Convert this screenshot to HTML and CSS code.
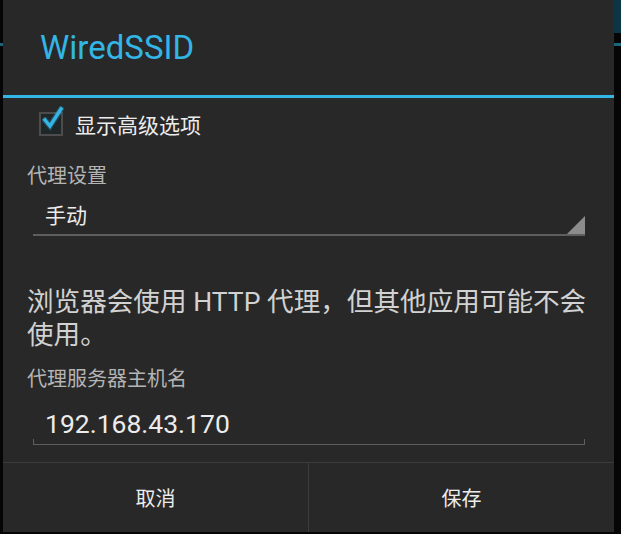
FILE: index.html
```html
<!DOCTYPE html>
<html lang="zh-CN">
<head>
    <meta charset="UTF-8">
    <title>WiredSSID</title>
    <meta name="viewport" content="width=device-width, initial-scale=1">
    <link rel="stylesheet" href="styles.css">
</head>
<body>
    <div class="dialog">
        <div class="title">WiredSSID</div>
        <div class="title-rule"></div>

        <div class="content">
            <label class="check">
                <span class="check-box">
                    <svg width="30" height="30" viewBox="0 0 30 30">
                        <path d="M6 15 L11 21 L22 4" fill="none" stroke="#33b5e5" stroke-width="6" stroke-opacity="0.25" stroke-linecap="round"/>
                        <path d="M6 15 L11 21 L22 4" fill="none" stroke="#33b5e5" stroke-width="3.5" stroke-linecap="square"/>
                    </svg>
                </span>
                <span>显示高级选项</span>
            </label>

            <div class="label">代理设置</div>
            <div class="spinner">手动</div>

            <p class="hint">浏览器会使用 HTTP 代理，但其他应用可能不会使用。</p>

            <div class="label">代理服务器主机名</div>
            <div class="edit">192.168.43.170</div>
        </div>

        <div class="buttons">
            <button>取消</button>
            <button>保存</button>
        </div>
    </div>
</body>
</html>
```

FILE: styles.css
```css
:root {
    --bg: #282828;
    --blue: #33b5e5;
    --text: #ececec;
    --muted: #b4b4b4;
    --line: #5e5e5e;
    --divider: #3c3c3c;
}

html, body {
    margin: 0;
    height: 100%;
}

body {
    background:
        linear-gradient(#0c3646, #0c3646) right top / 7px 33px no-repeat,
        linear-gradient(#1c6478, #1c6478) 0 43px / 100% 3px no-repeat,
        #050505;
    font-family: Roboto, "Noto Sans CJK SC", sans-serif;
    overflow: hidden;
}

.dialog {
    position: relative;
    margin-left: 3px;
    width: 611px;
    height: 532px;
    background: var(--bg);
    display: flex;
    flex-direction: column;
}

.title {
    height: 95px;
    padding-left: 37px;
    display: flex;
    align-items: center;
    font-size: 33px;
    color: var(--blue);
    box-sizing: border-box;
    padding-bottom: 1px;
}

.title-rule {
    height: 3px;
    background: var(--blue);
}

.content {
    flex: 1;
    padding: 0 24px;
}

.check {
    display: flex;
    align-items: center;
    gap: 12px;
    height: 32px;
    margin-top: 10px;
    padding-left: 12px;
    font-size: 21px;
    color: var(--text);
}

.check-box {
    position: relative;
    width: 20px;
    height: 20px;
    border: 2px solid #4c4c4c;
    background: #1f2628;
}

.check-box svg {
    position: absolute;
    left: -2px;
    top: -9px;
}

.label {
    margin-top: 24px;
    font-size: 20px;
    line-height: 24px;
    color: var(--muted);
}

.spinner {
    position: relative;
    margin: 0 5px 0 6px;
    height: 48px;
    padding: 6px 0 0 12px;
    box-sizing: border-box;
    display: flex;
    align-items: center;
    border-bottom: 2px solid var(--line);
    font-size: 21px;
    color: var(--text);
}

.spinner::after {
    content: "";
    position: absolute;
    right: 0;
    bottom: 0;
    width: 18px;
    height: 18px;
    background: #8c8c8c;
    clip-path: polygon(100% 0, 100% 100%, 0 100%);
}

.hint {
    margin: 49px -16px 0 0;
    font-size: 26.6px;
    line-height: 33px;
    color: #d2d2d2;
}

.content .hint + .label {
    margin-top: 16px;
}

.edit {
    position: relative;
    margin: 0 5px 0 6px;
    height: 54px;
    padding: 12px 0 0 12px;
    box-sizing: border-box;
    display: flex;
    align-items: center;
    border-bottom: 1px solid var(--line);
    font-size: 26.5px;
    color: var(--text);
}

.edit::before,
.edit::after {
    content: "";
    position: absolute;
    bottom: 0;
    width: 1px;
    height: 5px;
    background: var(--line);
}

.edit::before { left: 0; }
.edit::after { right: 0; }

.buttons {
    height: 70px;
    box-sizing: border-box;
    border-top: 1px solid var(--divider);
    display: flex;
}

.buttons button {
    flex: 1;
    background: none;
    border: none;
    color: var(--text);
    font-family: Roboto, "Noto Sans CJK SC", sans-serif;
    font-size: 20px;
    padding: 0;
}

.buttons button + button {
    border-left: 1px solid var(--divider);
}
```
